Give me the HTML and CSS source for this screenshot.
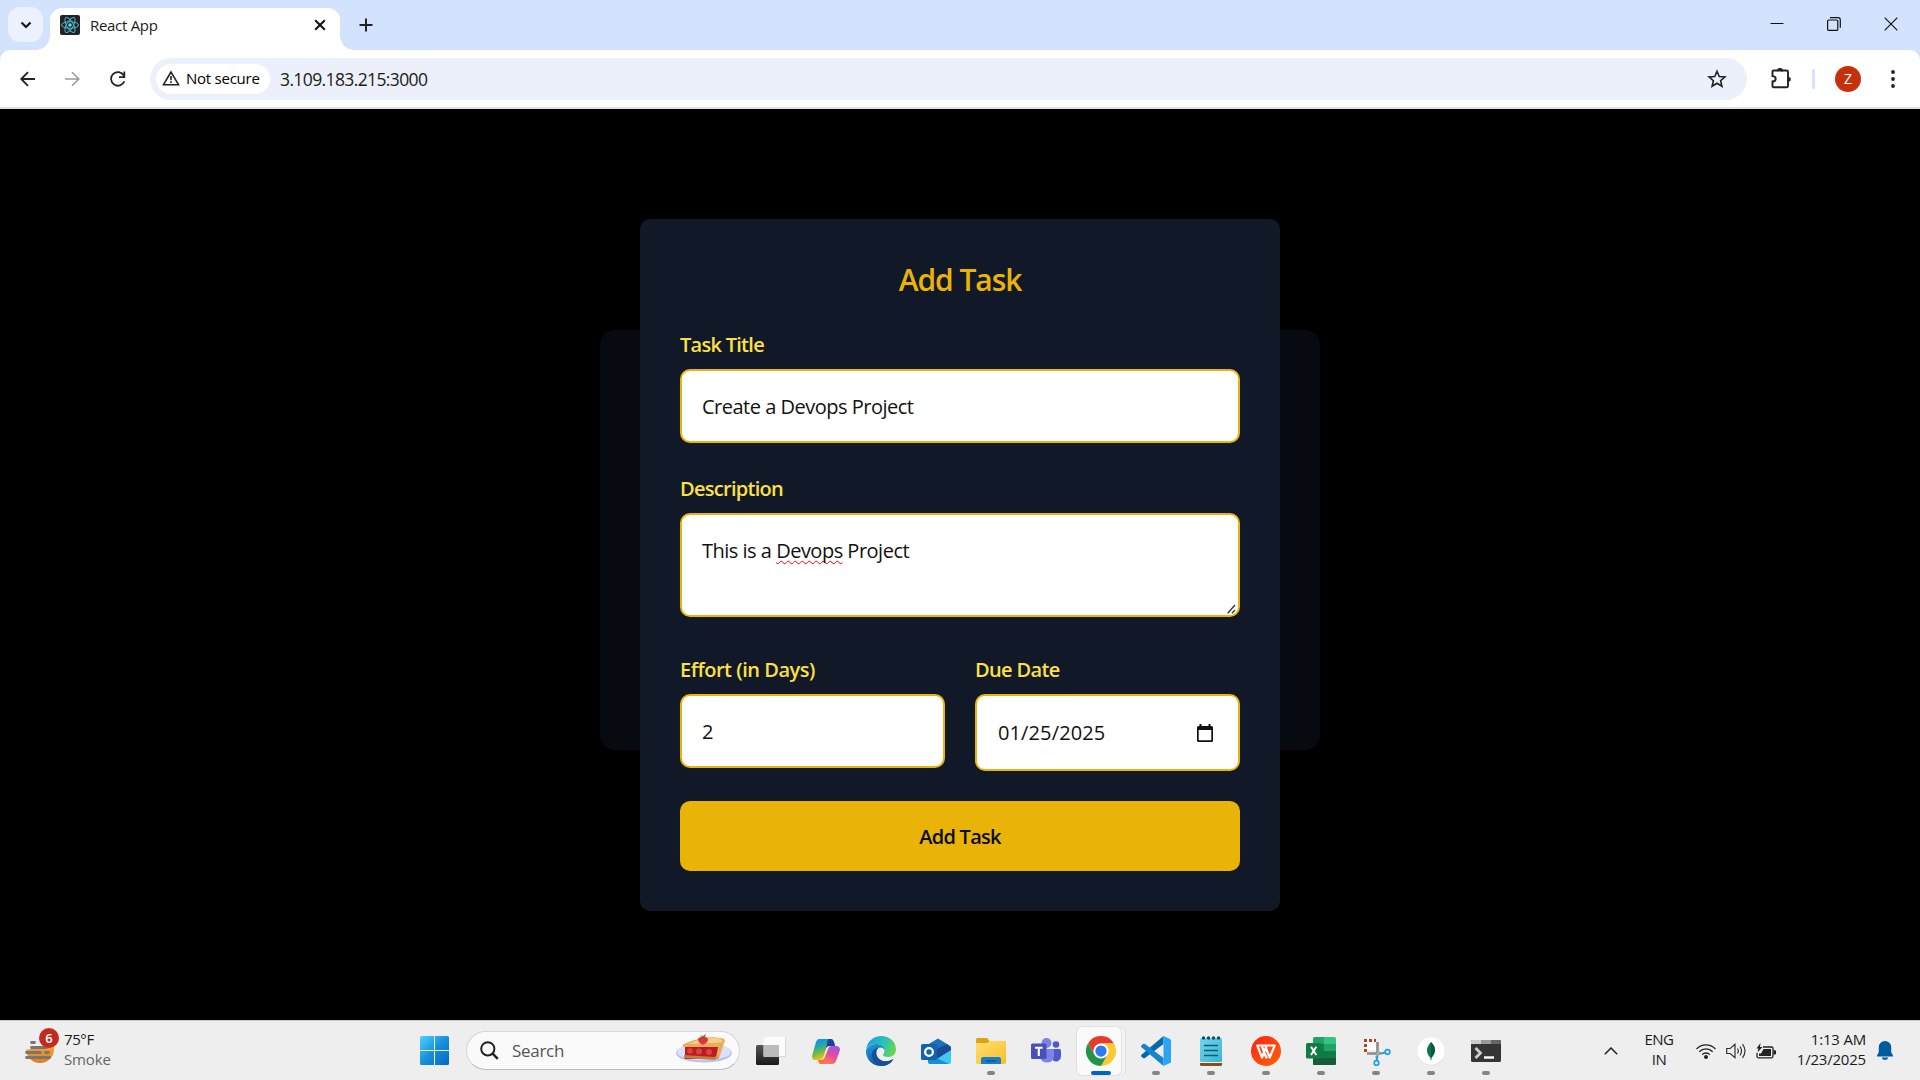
FILE: index.html
```html
<!DOCTYPE html>
<html lang="en">
<head>
<meta charset="utf-8">
<title>React App</title>
<link rel="stylesheet" href="styles.css">
</head>
<body>
<div class="screen">
  <header class="tabstrip">
    <div class="tab-search"><svg width="12" height="8" viewBox="0 0 12 8"><path d="M1.500 1.500 6 6l4.500-4.500" fill="none" stroke="#111" stroke-width="2.200"/></svg></div>
    <div class="tab">
      <svg class="favicon" width="20" height="20" viewBox="0 0 20 20"><rect width="20" height="20" rx="2" fill="#222"/><g fill="none" stroke="#4fb3ce" stroke-width="1"><ellipse cx="10" cy="10" rx="8.500" ry="3.300"/><ellipse cx="10" cy="10" rx="8.500" ry="3.300" transform="rotate(60 10 10)"/><ellipse cx="10" cy="10" rx="8.500" ry="3.300" transform="rotate(120 10 10)"/></g><circle cx="10" cy="10" r="1.700" fill="#61dafb"/></svg>
      <span class="tab-title">React App</span>
      <svg class="tab-close" width="12" height="12" viewBox="0 0 12 12"><path d="M1.200 1.200l9.600 9.600M10.800 1.200l-9.600 9.600" stroke="#111" stroke-width="2"/></svg>
    </div>
    <svg class="new-tab" width="14" height="14" viewBox="0 0 14 14"><path d="M7 .5v13M.5 7h13" stroke="#222" stroke-width="2"/></svg>
    <div class="window-buttons">
      <svg width="14" height="14" viewBox="0 0 14 14"><path d="M.5 6.500h13" stroke="#111"/></svg>
      <svg width="14" height="14" viewBox="0 0 14 14" fill="none" stroke="#111" stroke-width="1.200"><rect x=".6" y="3" width="10.200" height="10.400" rx="1"/><path d="M3 .7h8a2.300 2.300 0 0 1 2.300 2.300v7.700"/></svg>
      <svg width="14" height="14" viewBox="0 0 14 14"><path d="M.7.700l12.600 12.600M13.300.700.700 13.300" stroke="#111" stroke-width="1.200"/></svg>
    </div>
  </header>

  <div class="toolbar-bg">
  <nav class="toolbar">
    <div class="nav-buttons">
      <svg width="16" height="16" viewBox="0 0 16 16"><path d="M15 8H1.500M8 1.200 1.200 8 8 14.800" fill="none" stroke="#222" stroke-width="1.800"/></svg>
      <svg width="16" height="16" viewBox="0 0 16 16"><path d="M0 8H13.500M7 1.200 13.800 8 7 14.800" fill="none" stroke="#9a9a9a" stroke-width="1.600"/></svg>
      <svg width="16" height="16" viewBox="0 0 16 16"><path d="M14.300 10.200A6.800 6.800 0 1 1 13.800 4.500L14.300 5.300" fill="none" stroke="#222" stroke-width="1.800"/><path d="M14.300.500v5.600H9" fill="none" stroke="#222" stroke-width="1.800"/></svg>
    </div>
    <div class="omnibox">
      <div class="chip">
        <svg width="18" height="16" viewBox="0 0 18 16"><path d="M9 2 1.500 14.700h15z" fill="none" stroke="#222" stroke-width="1.600"/><path d="M9 6v4.200M9 11.300v1.700" stroke="#222" stroke-width="1.600"/></svg>
        <span>Not secure</span>
      </div>
      <span class="url">3.109.183.215:3000</span>
      <svg class="star" width="20" height="20" viewBox="0 0 20 20"><path d="M10 2.200l2.250 5.250 5.700.5-4.330 3.750 1.300 5.600L10 14.300l-4.920 3 1.300-5.600L2.050 7.950l5.700-.5z" fill="none" stroke="#222" stroke-width="1.600"/></svg>
    </div>
    <svg width="21" height="21" viewBox="0 0 21 21"><path d="M2.500 2.500h4.200M10.300 2.500h5.200a1.500 1.500 0 0 1 1.500 1.500v14a1.200 1.200 0 0 1-1.200 1.200H2.500a1 1 0 0 1-1-1v-4.700c2.600 0 3.200-1.300 3.200-2.700s-.6-2.700-3.200-2.700V3.500a1 1 0 0 1 1-1h4" fill="none" stroke="#222" stroke-width="1.900"/><path d="M6 3.400V2.300a2.700 2.100 0 0 1 6 0v1.100zM16.500 9h1.300a2 2.300 0 0 1 0 4.700h-1.300z" fill="#222"/></svg>
    <div class="toolbar-divider"></div>
    <div class="avatar">Z</div>
    <svg class="menu-dots" width="4" height="18" viewBox="0 0 4 18" fill="#222"><circle cx="2" cy="2" r="1.900"/><circle cx="2" cy="9" r="1.900"/><circle cx="2" cy="16" r="1.900"/></svg>
  </nav>
  </div>

  <main class="page">
    <div class="backdrop-panel"></div>
    <form class="modal">
      <h2 class="modal-title">Add Task</h2>
      <label class="label">Task Title</label>
      <div class="field title-field">Create a Devops Project</div>
      <label class="label">Description</label>
      <div class="field textarea"><span>This is a <span class="misspelled">Devops</span> Project</span>
        <svg class="resizer" width="10" height="10" viewBox="0 0 10 10"><path d="M.7 9.300 8 1M5 9.300 8 6" stroke="#333" stroke-width="1.300"/></svg>
      </div>
      <div class="row">
        <div class="col"><label class="label">Effort (in Days)</label><div class="field">2</div></div>
        <div class="col"><label class="label">Due Date</label>
          <div class="field date"><span>01/25/2025</span>
            <svg width="16" height="18" viewBox="0 0 16 18"><path d="M2.500 0h2v2h7V0h2v2H14.500A1.500 1.500 0 0 1 16 3.500v13A1.500 1.500 0 0 1 14.500 18h-13A1.500 1.500 0 0 1 0 16.500v-13A1.500 1.500 0 0 1 1.500 2h1zM1.700 6v10.300h12.600V6z" fill="#111" fill-rule="evenodd"/></svg>
          </div>
        </div>
      </div>
      <button class="submit" type="button">Add Task</button>
    </form>
  </main>

  <footer class="taskbar">
    <div class="weather">
      <div class="weather-icon">
        <svg width="30" height="28" viewBox="0 0 30 28"><defs><linearGradient id="sun" x2="0" y2="1"><stop stop-color="#f8c23a"/><stop offset="1" stop-color="#e8781f"/></linearGradient></defs><circle cx="15" cy="12" r="14" fill="url(#sun)"/><path d="M0 0h30v9H22L0 13z" fill="#eee"/><path d="M6.500 5.500h3M6.500 10.500h15M1.500 15.500h14M20.500 15.500h3M1.500 20.500h23" stroke="#777" stroke-width="2.800" stroke-linecap="round"/></svg>
        <span class="badge">6</span>
      </div>
      <div class="weather-text"><span class="temp">75°F</span><span class="cond">Smoke</span></div>
    </div>

    <svg class="start" width="29" height="29" viewBox="0 0 29 29"><defs><linearGradient id="win" x2="1" y2="1"><stop stop-color="#4ed2ff"/><stop offset=".5" stop-color="#168fdc"/><stop offset="1" stop-color="#0069c4"/></linearGradient></defs><path d="M1.500 0H14v14H0V1.500A1.500 1.500 0 0 1 1.500 0zM15 0h12.500A1.500 1.500 0 0 1 29 1.500V14H15zM0 15h14v14H1.500A1.500 1.500 0 0 1 0 27.500zM15 15h14v12.500a1.500 1.500 0 0 1-1.500 1.500H15z" fill="url(#win)"/></svg>

    <div class="search">
      <svg width="19" height="19" viewBox="0 0 19 19" fill="none" stroke="#222"><circle cx="7.800" cy="7.800" r="6.600" stroke-width="2"/><path d="M12.600 12.600l5.200 5.200" stroke-width="2.400"/></svg>
      <span>Search</span>
      <svg class="pie" width="56" height="30" viewBox="0 0 56 30"><ellipse cx="28" cy="19" rx="28" ry="9.500" fill="#b9c1ee"/><ellipse cx="28" cy="18" rx="27" ry="8.300" fill="#dbe0ff"/><path d="M9 12h37l-3 11-5 2H9z" fill="#b91d22"/><path d="M8 21l30 2 5-2v3l-5 2-30-2z" fill="#c27e3e"/><path d="M8 10C19 5 34 2 44 4c5 0 6 3 4 5l-4 13-4 2 2-11-33 0c-3 0-3-2-1-3z" fill="#e9ac5c"/><path d="M12 10C22 5 34 3 43 4.500c4 1 4 3 2 4z" fill="#f9cf88"/><g fill="#df4143"><circle cx="14" cy="17" r="2.800"/><circle cx="23" cy="17.500" r="3"/><circle cx="33" cy="18" r="3"/></g><path d="M22 5c1-3 9-3 10 0 0 3-3 5.500-5 5.500S22 8 22 5z" fill="#df3440"/><path d="M26 3l-2-2 3 1 3-2-1 3z" fill="#4b8b3b"/></svg>
    </div>

    <div class="apps">
      <div class="app"><svg width="30" height="30" viewBox="0 0 30 30"><defs><linearGradient id="tv" x2="0" y2="1"><stop stop-color="#555"/><stop offset="1" stop-color="#191919"/></linearGradient></defs><rect x="0" y="9" width="23" height="20" rx="1.500" fill="url(#tv)"/><rect x="7.500" y="1" width="22" height="20" rx="1" fill="#fff" opacity=".75"/><path d="M7.500 9H23v12H8.500a1 1 0 0 1-1-1z" fill="#bbb"/><path d="M29.500 2v18.500H23" fill="none" stroke="#ccc" stroke-width=".7"/></svg></div>
      <div class="app"><svg width="30" height="30" viewBox="0 0 30 30"><defs><linearGradient id="cpa" x2=".4" y2="1"><stop stop-color="#1689ef"/><stop offset=".35" stop-color="#19a5bd"/><stop offset=".65" stop-color="#6fb944"/><stop offset="1" stop-color="#ffc51c"/></linearGradient><linearGradient id="cpb" x1=".8" x2=".2" y2="1"><stop stop-color="#9b59e8"/><stop offset=".45" stop-color="#e54b9c"/><stop offset="1" stop-color="#ff8a42"/></linearGradient></defs><path d="M8 3h12q2 0 3 3l1 4h-6q-2 0-3 3l-3 9q-1 2-3 2H4q-3 0-3-4L5 6q1-3 3-3z" fill="url(#cpa)"/><path d="M17 3h3q2 0 3 3l1 4h-6q-2 0-3 2z" fill="#17449c"/><path d="M20 10h5q4 0 4 4l-4 11q-1 3-4 3H10q-2 0-3-4h4q2 0 3-3l3-8q1-3 3-3z" fill="url(#cpb)"/><path d="M7 24h4q2 0 3-3l1-3q1 10-5 10-2 0-3-4z" fill="#f7733f"/></svg></div>
      <div class="app"><svg width="30" height="30" viewBox="0 0 30 30"><defs><linearGradient id="eg" x1="0" x2="1" y1=".2" y2=".5"><stop stop-color="#1b9de2"/><stop offset=".6" stop-color="#2bc3b5"/><stop offset="1" stop-color="#65d84c"/></linearGradient><linearGradient id="eb" x2=".7" y2="1"><stop stop-color="#1b9fe3"/><stop offset="1" stop-color="#114a8b"/></linearGradient></defs><path d="M0 14C1 5 8 0 15 0c9 0 15 6 15 13 0 5-3 8-8 8-3 0-5-1-5-2 0-.600 1.500-1.500 1.500-4 0-4-4-7-9-7C5 8 1.500 10 0 14z" fill="url(#eg)"/><path d="M0 14C2 10 5 8 9.500 8c5 0 8.500 2.500 9 6-1-2-2.600-2.800-4.500-2.500-3.500.500-4.500 5-3 8.500C13 25 20 27.500 27.500 23 25 27.500 20 30 15 30 6 30-.5 23 0 14z" fill="url(#eb)"/><path d="M11 20c-1.500-3-1-7 2-8.300-5 .3-8 4.300-7 9.300 1 5 5 8.300 10 9 5-.3 9-2.500 11.500-7C20 27.500 13 25 11 20z" fill="#164f96"/></svg></div>
      <div class="app"><svg width="30" height="28" viewBox="0 0 30 28"><path d="M6 8 17 1.500 30 9.500V13L6 17z" fill="#1c70bd"/><path d="M7 9h15v10H7z" fill="#0f6fc4"/><path d="M14 13l12-6 4 4v3L14 24z" fill="#184b94"/><path d="M30 13v12a2 2 0 0 1-2 2H8z" fill="#43c8f2"/><path d="M7 17l21 10H9a2 2 0 0 1-2-2z" fill="#178fd6"/><rect y="7" width="16" height="16" rx="1.500" fill="#0f63b3"/><circle cx="8" cy="15" r="3.900" fill="none" stroke="#fff" stroke-width="2.300"/></svg></div>
      <div class="app running"><svg width="30" height="28" viewBox="0 0 30 28"><defs><linearGradient id="fo" x2="1" y2="1"><stop stop-color="#ffdf70"/><stop offset="1" stop-color="#f8bf27"/></linearGradient></defs><path d="M0 2.500A1.500 1.500 0 0 1 1.500 1H11l2.500 3H28.500A1.500 1.500 0 0 1 30 5.500V12H0z" fill="#dda115"/><path d="M0 6h11l3-2h14.500A1.500 1.500 0 0 1 30 5.500V25.500a1.500 1.500 0 0 1-1.500 1.500h-27A1.500 1.500 0 0 1 0 25.500z" fill="url(#fo)"/><path d="M5 27v-4.500A2.500 2.500 0 0 1 7.500 20h15a2.500 2.500 0 0 1 2.500 2.500V27z" fill="#197bc9"/><path d="M10 24h10" stroke="#0d5190" stroke-width="1.300"/></svg></div>
      <div class="app"><svg width="30" height="28" viewBox="0 0 30 28"><circle cx="15.500" cy="6" r="5" fill="#7b83eb"/><circle cx="25" cy="7.500" r="3.300" fill="#5059c9"/><path d="M19 12h9.500a1.500 1.500 0 0 1 1.500 1.500v6a5 5 0 0 1-8 4z" fill="#5059c9"/><path d="M9 12h13a1 1 0 0 1 1 1v7a7.200 7.200 0 0 1-14 0z" fill="#7b83eb"/><rect y="6.500" width="15.500" height="15.500" rx="1.500" fill="#4a50b5"/><path d="M4 10.700h7.600M7.800 11v8" stroke="#fff" stroke-width="2.100"/></svg></div>
      <div class="app running active"><svg width="30" height="30" viewBox="0 0 48 48"><circle cx="24" cy="24" r="24" fill="#fff"/><path d="M3.200 12A24 24 0 0 1 44.800 12H24a12 12 0 0 0-10.400 18z" fill="#e33b2e"/><path d="M44.800 12A24 24 0 0 1 24 48L34.400 30A12 12 0 0 0 24 12z" fill="#fcc934"/><path d="M24 48A24 24 0 0 1 3.200 12L13.600 30a12 12 0 0 0 20.800 0z" fill="#229447"/><circle cx="24" cy="24" r="11.500" fill="#fff"/><circle cx="24" cy="24" r="9" fill="#3078ed"/></svg></div>
      <div class="app running"><svg width="30" height="30" viewBox="0 0 30 30"><path d="M22.500 0v8L4 22q-1 .700-2 0L.5 20.700q-1-1 0-2z" fill="#0967ad"/><path d="M22.500 30v-8L4 8q-1-.700-2 0L.5 9.300q-1 1 0 2z" fill="#1583cd"/><path d="M22.500 0 29 3q1 .6 1 1.600v20.800q0 1-1 1.600l-6.500 3z" fill="#2ba5f3"/></svg></div>
      <div class="app running"><svg width="24" height="30" viewBox="0 0 24 30"><defs><linearGradient id="np" x2="1" y2="1"><stop stop-color="#74d6ef"/><stop offset="1" stop-color="#39b3d3"/></linearGradient></defs><rect x="1" y="25" width="22" height="5" rx="1.500" fill="#874f1d"/><rect x="1" y="24" width="22" height="3" fill="#eee"/><rect x="1" y="2" width="22" height="24" rx="1.500" fill="url(#np)"/><path d="M5 9.500h14M5 14.500h14M5 19.500h14" stroke="#075b7a" stroke-width="1.500"/><g fill="#0b5067"><circle cx="4.500" cy="2" r="1.700"/><circle cx="9.500" cy="2" r="1.700"/><circle cx="14.500" cy="2" r="1.700"/><circle cx="19.500" cy="2" r="1.700"/></g></svg></div>
      <div class="app running"><svg width="30" height="30" viewBox="0 0 30 30"><defs><linearGradient id="wp" x2="1" y2="1"><stop stop-color="#ff2015"/><stop offset="1" stop-color="#ff6506"/></linearGradient></defs><circle cx="15" cy="15" r="15" fill="url(#wp)"/><path d="M14.500 9.500H6.300l4.700 12 4.700-12M15.200 21.500 10.800 10M15.500 21.500 13.500 17M14.500 9.500h9.200l-5 12-4-10" fill="none" stroke="#fff" stroke-width="2.200" stroke-linejoin="round" stroke-linecap="round"/></svg></div>
      <div class="app running"><svg width="30" height="28" viewBox="0 0 30 28"><path d="M7 1.500A1.500 1.500 0 0 1 8.500 0H18v28H8.500A1.500 1.500 0 0 1 7 26.500z" fill="#21a366"/><path d="M18 0h10.500A1.500 1.500 0 0 1 30 1.500V7H18z" fill="#33c481"/><path d="M18 7h12v7H18z" fill="#21a366"/><path d="M7 14h23v13.500H7z" fill="#107c41"/><path d="M7 21h23v5.500a1.500 1.500 0 0 1-1.500 1.500h-20A1.500 1.500 0 0 1 7 26.500z" fill="#185c37"/><path d="M7 7h11v7H7z" fill="#128249"/><rect y="6" width="15.500" height="15.500" rx="1.500" fill="#107c41"/><path d="M5 9.700l5.300 8.300M10.300 9.700 5 18" stroke="#fff" stroke-width="2"/></svg></div>
      <div class="app running"><svg width="30" height="30" viewBox="0 0 30 30"><path d="M4 3h11v11H4z" fill="#fff"/><path d="M4.500 16V4.500H15" fill="none" stroke="#c23b1d" stroke-width="3" stroke-dasharray="3 2"/><path d="M16.500 6v14M6 17.500h14" stroke="#8b8b8b" stroke-width="2.600"/><path d="M18 15l-3 7" stroke="#aaa" stroke-width="2.500"/><circle cx="15.500" cy="27" r="2.300" fill="none" stroke="#229ce2" stroke-width="1.700"/><circle cx="26.500" cy="16" r="2.300" fill="none" stroke="#229ce2" stroke-width="1.700"/><path d="M16.500 20l-1 5M20 17.500l4.500-1" stroke="#229ce2" stroke-width="2"/></svg></div>
      <div class="app running"><svg width="30" height="30" viewBox="0 0 30 30"><circle cx="15" cy="15.500" r="14" fill="#ddd"/><circle cx="15" cy="15" r="13.800" fill="#fff"/><path d="M15 6c5 5 5.500 10 .5 16v2h-1v-2C9.500 17 10 11 15 6z" fill="#0c7650"/><path d="M15 6c5 5 5.500 10 0 16z" fill="#09573e"/></svg></div>
      <div class="app running"><svg width="30" height="24" viewBox="0 0 30 24"><rect y="1" width="30" height="22" rx="1.500" fill="#353535"/><path d="M0 5V2.500A1.500 1.500 0 0 1 1.500 1H10v4z" fill="#ccc"/><path d="M10 1h10v4H10z" fill="#999"/><path d="M20 1h8.500A1.500 1.500 0 0 1 30 2.500V5H20z" fill="#666"/><path d="M4.500 9l5 5-5 5" fill="none" stroke="#ccc" stroke-width="2.800"/><path d="M13 18.500h10" stroke="#fff" stroke-width="2.400"/></svg></div>
    </div>

    <div class="tray">
      <svg width="14" height="8" viewBox="0 0 14 8"><path d="M.8 7.200 7 1l6.200 6.200" fill="none" stroke="#222" stroke-width="1.500"/></svg>
      <div class="lang"><span>ENG</span><span>IN</span></div>
      <div class="status">
        <svg width="20" height="16" viewBox="0 0 20 16" fill="none" stroke="#222" stroke-width="1.300"><path d="M.5 6a13.200 13.200 0 0 1 19 0M3.300 8.800a9.300 9.300 0 0 1 13.400 0M6.100 11.600a5.500 5.500 0 0 1 7.800 0"/><circle cx="10" cy="14" r="1.300" fill="#222"/></svg>
        <svg width="20" height="16" viewBox="0 0 20 16" fill="none" stroke="#333" stroke-width="1.200"><path d="M.7 5.500h3.500L9 1.300v13.400l-4.800-4.200H.7zM11.500 5.500q1.700 2.500 0 5M14 3.500q3 4.500 0 9M16.500 1.200q5 6.800 0 13.600"/></svg>
        <svg width="20" height="16" viewBox="0 0 20 16"><path d="M7 4h8.500A1.500 1.500 0 0 1 17 5.500v7.800A1.500 1.500 0 0 1 15.500 14.800H2.500A1.500 1.500 0 0 1 1 13.300V10" fill="none" stroke="#222" stroke-width="1.300"/><path d="M7.500 6H15v7H3v-2.500h2z" fill="#222"/><path d="M17.500 7.300h1.700a.8.800 0 0 1 .8.800v2.600a.8.800 0 0 1-.8.800h-1.700zM4.500 0 .5 5.500h2L1.500 9.500 6.500 4H4z" fill="#222"/></svg>
      </div>
      <div class="clock"><span class="time">1:13 AM</span><span>1/23/2025</span></div>
      <svg class="bell" width="16" height="19" viewBox="0 0 16 19"><path d="M8 0a6.200 6.200 0 0 1 6.200 6.200v5L16 14.500v1H0v-1l1.800-3.300v-5A6.200 6.200 0 0 1 8 0zM5 16.500h6a3 2.300 0 0 1-6 0z" fill="#005a9e"/></svg>
    </div>
  </footer>
</div>
</body>
</html>
```
FILE: styles.css
```css
* { box-sizing: border-box; }
body { margin: 0; background: #000; font-family: "Open Sans", "Noto Sans", sans-serif; color: #1b1b1b; }
svg { display: block; flex: none; }
.screen { width: 1920px; height: 1080px; display: flex; flex-direction: column; overflow: hidden; }

/* Browser tab strip */
.tabstrip { height: 50px; background: #d3e3fd; display: flex; align-items: flex-start; padding-left: 8px; }
.tab-search { width: 35px; height: 35px; margin-top: 7px; border-radius: 12px; background: #ebf1fe; display: flex; align-items: center; justify-content: center; }
.tab { position: relative; width: 290px; height: 42px; margin: 8px 0 0 7px; padding: 0 14px 8px 10px; border-radius: 12px 12px 0 0; background: #fff; display: flex; align-items: center; }
.tab::before, .tab::after { content: ""; position: absolute; bottom: 0; width: 14px; height: 14px; }
.tab::before { left: -14px; background: radial-gradient(circle at 0 0, transparent 13.500px, #fff 14px); }
.tab::after { right: -14px; background: radial-gradient(circle at 100% 0, transparent 13.500px, #fff 14px); }
.tab-title { margin-left: 10px; font-size: 15px; letter-spacing: -.3px; }
.tab-close { margin-left: auto; }
.new-tab { margin: 18px 0 0 19px; }
.window-buttons { margin: 17px 22px 0 auto; display: flex; gap: 43px; }

/* Address bar */
.toolbar-bg { background: #d3e3fd; }
.toolbar { height: 59px; background: #fff; border-radius: 10px 10px 0 0; border-bottom: 2px solid #dfe2e2; display: flex; align-items: center; padding: 0 25px 0 20px; }
.nav-buttons { display: flex; gap: 29px; width: 130px; }
.omnibox { width: 1597px; height: 42px; border-radius: 21px; background: #ebf0fa; display: flex; align-items: center; padding: 0 20px 0 6px; margin-right: 24px; }
.chip { width: 114px; height: 30px; border-radius: 15px; background: #fff; display: flex; align-items: center; gap: 6px; padding: 0 0 1px 6px; font-size: 15px; font-weight: 500; letter-spacing: -.25px; white-space: nowrap; color: #000; }
.chip span { margin-top: -1px; }
.url { margin-left: 10px; font-size: 17.500px; letter-spacing: -.62px; }
.star { margin-left: auto; }
.toolbar-divider { width: 3px; height: 20px; margin: 0 20px 0 20px; background: #d3e3fd; border-radius: 1px; }
.avatar { width: 26px; height: 26px; border-radius: 50%; background: #c5310c; color: #fff; font-size: 14px; line-height: 26px; text-align: center; }
.menu-dots { margin-left: auto; }

/* Task form */
.page { flex: 1; background: #000; display: grid; justify-items: center; align-items: start; }
.backdrop-panel, .modal { grid-area: 1 / 1; }
.backdrop-panel { width: 720px; height: 420px; margin-top: 221px; border-radius: 15px; background: #070b11; }
.modal { width: 640px; margin-top: 110px; padding: 40px; border-radius: 10px; background: #111827; }
.modal-title { margin: 0 0 30px; padding-top: 2px; font-size: 30px; line-height: 38px; font-weight: 600; letter-spacing: -1.050px; color: #eab308; text-align: center; }
.label { display: block; height: 30px; margin-bottom: 10px; font-size: 20px; line-height: 32px; font-weight: 600; letter-spacing: -.72px; color: #fde047; }
.field { height: 74px; border: 2px solid #eab308; border-radius: 10px; background: #fff; padding: 0 20px; font-size: 20px; line-height: 72px; letter-spacing: -.5px; color: #111; }
.title-field { margin-bottom: 30px; }
.textarea { position: relative; height: 104px; padding: 21px 20px 0; line-height: 30px; margin-bottom: 37px; }
.misspelled { text-decoration: underline wavy #f00 1px; text-decoration-skip-ink: none; text-underline-offset: 2px; }
.resizer { position: absolute; right: 1px; bottom: 1px; }
.row { display: grid; grid-template-columns: 1fr 1fr; gap: 30px; margin-bottom: 30px; }
.row .label { letter-spacing: -.47px; }
.row .col + .col .label { letter-spacing: -.65px; }
.date { height: 77px; line-height: 73px; padding: 0 25px 0 21px; display: flex; align-items: center; justify-content: space-between; letter-spacing: .12px; }
.submit { display: block; width: 100%; height: 70px; border: 0; border-radius: 10px; background: #eab308; font: 600 20px/70px "Open Sans", sans-serif; letter-spacing: -.75px; color: #0b0b0b; padding: 1px 0 0; }

/* Taskbar */
.taskbar { height: 60px; background: #eee; border-top: 1px solid #c9c9c9; display: flex; align-items: center; font-size: 15px; line-height: 20px; }
.weather { width: 395px; padding: 0 0 3px 25px; display: flex; align-items: center; gap: 9px; }
.weather-icon { position: relative; padding-top: 4px; }
.badge { position: absolute; left: 14px; top: -5px; width: 20px; height: 20px; border-radius: 50%; background: #c42b1c; color: #fff; font-size: 13px; font-weight: 600; text-align: center; }
.weather-text, .lang, .clock { display: flex; flex-direction: column; }
.temp { letter-spacing: -.4px; }
.cond { color: #666; letter-spacing: -.15px; }
.start { margin-left: 25px; }
.search { width: 274px; height: 39px; margin: 0 3px 0 17px; border: 1px solid #d5d5d5; border-bottom-color: #bbb; border-radius: 20px; background: #fafafa; display: flex; align-items: center; padding: 0 7px 0 13px; font-size: 17px; letter-spacing: -.3px; color: #555; }
.search span { margin-left: 13px; }
.pie { margin: -3px 0 0 auto; }
.apps { display: flex; }
.app { position: relative; width: 55px; height: 48px; display: flex; align-items: center; justify-content: center; }
.running::after { content: ""; position: absolute; bottom: 0; left: 23.500px; width: 8px; height: 4px; border-radius: 2px; background: #858585; }
.active::before { content: ""; position: absolute; left: 4px; top: 0; width: 44px; height: 48px; border-radius: 5px; background: #fafafa; box-shadow: 0 0 0 .5px #d4d4d4, 4.500px 0 0 -.5px #f4f4f4, 5px 0 0 0 #ddd; }
.active svg { position: relative; }
.active::after { width: 20px; left: 17.500px; background: #0067c0; }
.tray { margin-left: auto; padding-right: 27px; display: flex; align-items: center; }
.lang { width: 30px; margin: 0 22px 3px 26px; text-align: center; letter-spacing: -.5px; }
.status { display: flex; gap: 10px; }
.clock { width: 90px; margin: 0 11px 3px 0; text-align: right; letter-spacing: -.2px; }
```
